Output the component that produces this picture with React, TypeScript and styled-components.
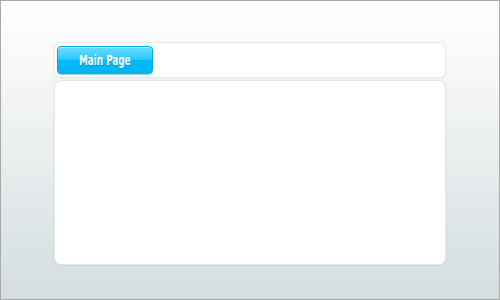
import styled, { createGlobalStyle } from "styled-components";

const GlobalStyle = createGlobalStyle`
  html, body {
    margin: 0;
    padding: 0;
  }
  body {
    font-family: "DejaVu Sans Condensed", "DejaVu Sans", sans-serif;
  }
`;

const Page = styled.div`
  box-sizing: border-box;
  width: 500px;
  height: 300px;
  border: 1px solid #a8a8a8;
  background: linear-gradient(to bottom, #ffffff 0%, #f6f7f7 25%, #e3e9ea 65%, #d4dde0 100%);
  padding: 42px 54px 0;
  display: flex;
  flex-direction: column;
  gap: 4px;
`;

const NavBar = styled.div`
  box-sizing: border-box;
  height: 34px;
  background: #ffffff;
  border-radius: 5px;
  box-shadow: 0 0 0 1px #e6e9ea, 0 1px 2px rgba(150, 165, 170, 0.35);
  display: flex;
  align-items: center;
  padding: 0 2px;
`;

const NavButton = styled.button`
  box-sizing: border-box;
  width: 96px;
  height: 28px;
  border: 1px solid #08a4e4;
  border-radius: 4px;
  background: linear-gradient(
    to bottom,
    #6cdcff 0%,
    #2fcbff 45%,
    #06b9f7 52%,
    #01b4f3 100%
  );
  box-shadow: inset 0 1px 0 rgba(255, 255, 255, 0.45), 0 1px 1px rgba(0, 120, 170, 0.35);
  padding: 0;
  display: flex;
  align-items: center;
  justify-content: center;
  cursor: pointer;
`;

const ButtonLabel = styled.span`
  display: inline-block;
  color: #ffffff;
  font-family: "DejaVu Sans Condensed", "DejaVu Sans", sans-serif;
  font-weight: bold;
  font-size: 14px;
  transform: scaleX(0.7);
  white-space: nowrap;
  text-shadow: 0 1px 1px rgba(0, 90, 140, 0.4);
`;

const Content = styled.div`
  height: 183px;
  background: #ffffff;
  border-radius: 6px;
  box-shadow: 0 0 0 1px #e3e8ea, 0 1px 3px rgba(140, 160, 168, 0.4);
`;

export default function App() {
  return (
    <>
      <GlobalStyle />
      <Page>
        <NavBar>
          <NavButton>
            <ButtonLabel>Main Page</ButtonLabel>
          </NavButton>
        </NavBar>
        <Content />
      </Page>
    </>
  );
}
